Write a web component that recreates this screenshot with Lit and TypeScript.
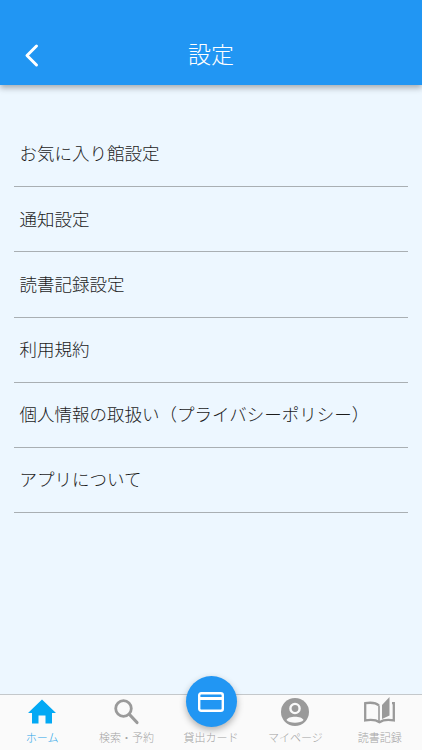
import { LitElement, html, css, svg } from "lit";
import { customElement } from "lit/decorators.js";

const ITEMS = ["お気に入り館設定", "通知設定", "読書記録設定", "利用規約", "個人情報の取扱い（プライバシーポリシー）", "アプリについて"];

const homeIcon = svg`<path d="M14 1.5 L28 15 H24 V25.5 H17.5 V17.5 H10.5 V25.5 H4 V15 H0 Z" fill="#03a9f4"/>`;
const searchIcon = svg`<circle cx="10.5" cy="10.5" r="7.8" fill="none" stroke="#9a9a9a" stroke-width="2.8"/><path d="M16.5 16.5 L24 24.5" stroke="#9a9a9a" stroke-width="3.2" stroke-linecap="round"/>`;
const userIcon = svg`<circle cx="14" cy="14" r="14" fill="#9a9a9a"/><circle cx="14" cy="10.5" r="4.6" fill="none" stroke="#fafafa" stroke-width="2.4"/><path d="M5.5 22 C7 17.5 21 17.5 22.5 22 C20 25.5 8 25.5 5.5 22Z" fill="#fafafa"/>`;
const bookIcon = svg`<path d="M15 7.5 C12 4.8 6 4.4 1.2 5.2 V22.4 C6 21.6 12 21.8 15.5 24.2 C19 21.8 25 21.6 29.8 22.4 V5.2 H28" fill="none" stroke="#9a9a9a" stroke-width="2.3"/><path d="M15 7.5 V23.5" stroke="#9a9a9a" stroke-width="1.6"/><path d="M18 7 L25.5 -1 V17.5 L18 21 Z" fill="#9a9a9a"/>`;

@customElement("app-root")
export class AppRoot extends LitElement {
  static styles = css`
    :host {
      display: flex;
      flex-direction: column;
      width: 422px;
      height: 750px;
      overflow: hidden;
      background: #edf7ff;
      font-family: "Noto Sans CJK JP", "Noto Sans", sans-serif;
    }
    .bar {
      flex: none;
      height: 85px;
      box-sizing: border-box;
      padding-top: 24px;
      background: #2196f3;
      box-shadow: 0 3px 6px rgba(0, 0, 0, 0.3);
      display: grid;
      grid-template-columns: 64px 1fr 64px;
      align-items: center;
      position: relative;
      z-index: 1;
    }
    .back {
      display: flex;
      padding-left: 24px;
    }
    .title {
      text-align: center;
      color: #fff;
      font-size: 23px;
      font-weight: 300;
      padding-bottom: 4px;
    }
    .list {
      flex: 1;
      padding: 37px 14px 0;
    }
    .row {
      height: 65.2px;
      box-sizing: border-box;
      padding: 0 5.5px 2px;
      display: flex;
      align-items: center;
      border-bottom: 1px solid #a9afb3;
      color: #1c1c1c;
      font-size: 17.5px;
      font-weight: 300;
      line-height: 1;
    }
    .tabs {
      flex: none;
      height: 56px;
      box-sizing: border-box;
      background: #fafafa;
      border-top: 1px solid #c4c8cb;
      display: grid;
      grid-template-columns: repeat(5, 1fr);
      position: relative;
    }
    .tab {
      display: flex;
      flex-direction: column;
      align-items: center;
      justify-content: flex-end;
      padding-bottom: 6px;
      gap: 5px;
      color: #a4a4a4;
      font-size: 11px;
      font-weight: 300;
      line-height: 13px;
    }
    .tab.active {
      color: #2aa5e8;
    }
    .tab svg {
      display: block;
      overflow: visible;
    }
    .fab {
      position: absolute;
      left: 185.5px;
      top: -19px;
      width: 51px;
      height: 51px;
      border-radius: 50%;
      background: #2196f3;
      box-shadow: 0 3px 7px rgba(0, 0, 0, 0.3);
      display: flex;
      align-items: center;
      justify-content: center;
    }
  `;

  private tab(label: string, icon: unknown, w: number, active = false) {
    return html`<div class="tab ${active ? "active" : ""}">
      ${icon ? html`<svg width=${w} height="28" viewBox="0 0 ${w} 28">${icon}</svg>` : null}
      <span>${label}</span>
    </div>`;
  }

  render() {
    return html`
      <header class="bar">
        <div class="back">
          <svg width="16" height="26" viewBox="0 0 16 26">
            <path d="M12.5 4 L3 13.5 L12.5 23" fill="none" stroke="#fff" stroke-width="3" stroke-linecap="round" stroke-linejoin="round"/>
          </svg>
        </div>
        <div class="title">設定</div>
      </header>
      <main class="list">
        ${ITEMS.map((t) => html`<div class="row">${t}</div>`)}
      </main>
      <nav class="tabs">
        ${this.tab("ホーム", homeIcon, 28, true)}
        ${this.tab("検索・予約", searchIcon, 28)}
        ${this.tab("貸出カード", null, 0)}
        ${this.tab("マイページ", userIcon, 28)}
        ${this.tab("読書記録", bookIcon, 31)}
        <div class="fab">
          <svg width="26" height="20" viewBox="0 0 26 20">
            <rect x="1.2" y="1.2" width="23.6" height="17.6" rx="2" fill="none" stroke="#fff" stroke-width="2.4"/>
            <rect x="1.2" y="5" width="23.6" height="3" fill="#fff"/>
          </svg>
        </div>
      </nav>
    `;
  }
}
